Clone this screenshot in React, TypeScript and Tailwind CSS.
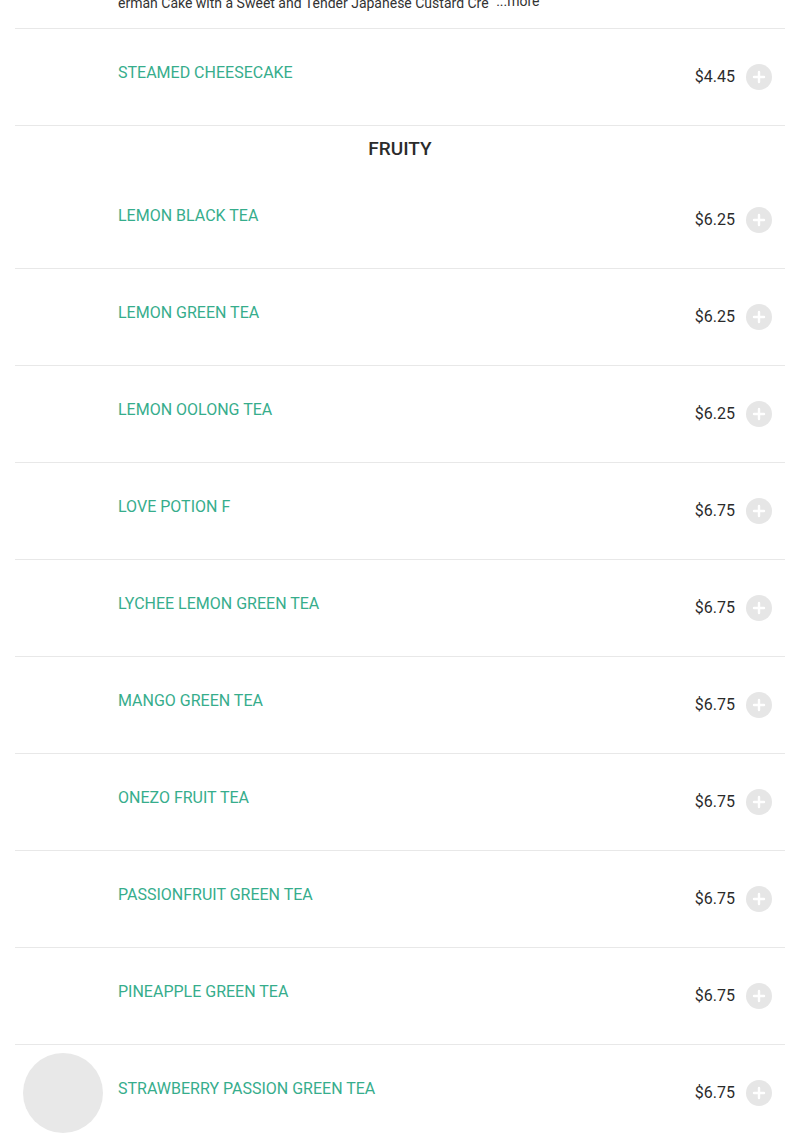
const items = [
  { name: "LEMON BLACK TEA", price: "$6.25" },
  { name: "LEMON GREEN TEA", price: "$6.25" },
  { name: "LEMON OOLONG TEA", price: "$6.25" },
  { name: "LOVE POTION F", price: "$6.75" },
  { name: "LYCHEE LEMON GREEN TEA", price: "$6.75" },
  { name: "MANGO GREEN TEA", price: "$6.75" },
  { name: "ONEZO FRUIT TEA", price: "$6.75" },
  { name: "PASSIONFRUIT GREEN TEA", price: "$6.75" },
  { name: "PINEAPPLE GREEN TEA", price: "$6.75" },
  { name: "STRAWBERRY PASSION GREEN TEA", price: "$6.75", image: true }
];

function PlusButton() {
  return (
    <div className="flex h-[26px] w-[26px] items-center justify-center rounded-full bg-[#e6e6e6]">
      <svg width="14" height="14" viewBox="0 0 14 14">
        <path d="M7 2v10M2 7h10" stroke="#fff" strokeWidth="2.4" strokeLinecap="round" />
      </svg>
    </div>
  );
}

function MenuRow({ name, price, image }: { name: string; price: string; image?: boolean }) {
  return (
    <div className="flex h-[97px] items-start border-b border-[#e8e8e8] py-2 pl-2 pr-[13px]">
      <div className={`h-20 w-20 shrink-0 rounded-full ${image ? "bg-[#e8e8e8]" : "bg-white"}`} />
      <div className="ml-[15px] flex-1 pt-6 text-[16px] leading-6 text-[#36ad8c]">{name}</div>
      <div className="flex h-20 items-center gap-[11px]">
        <span className="text-[16px] text-[#2b2b2b]">{price}</span>
        <PlusButton />
      </div>
    </div>
  );
}

export default function App() {
  return (
    <div className="min-h-[1141px] overflow-hidden bg-white" style={{ fontFamily: "Roboto, 'Liberation Sans', sans-serif" }}>
      <div className="mx-[15px]">
        <div className="flex h-[29px] items-start border-b border-[#e8e8e8] pl-[103px]">
          <p className="-mt-[7px] text-[14px] leading-5 text-[#333]">
            erman Cake with a Sweet and Tender Japanese Custard Cre <span className="relative -top-[2px] ml-1">...more</span>
          </p>
        </div>
        <MenuRow name="STEAMED CHEESECAKE" price="$4.45" />
        <div className="flex h-[46px] items-start justify-center pt-[11px]">
          <h2 className="text-[19px] font-medium leading-6 text-[#2b2b2b]">FRUITY</h2>
        </div>
        {items.map((item) => (
          <MenuRow key={item.name} {...item} />
        ))}
      </div>
    </div>
  );
}
